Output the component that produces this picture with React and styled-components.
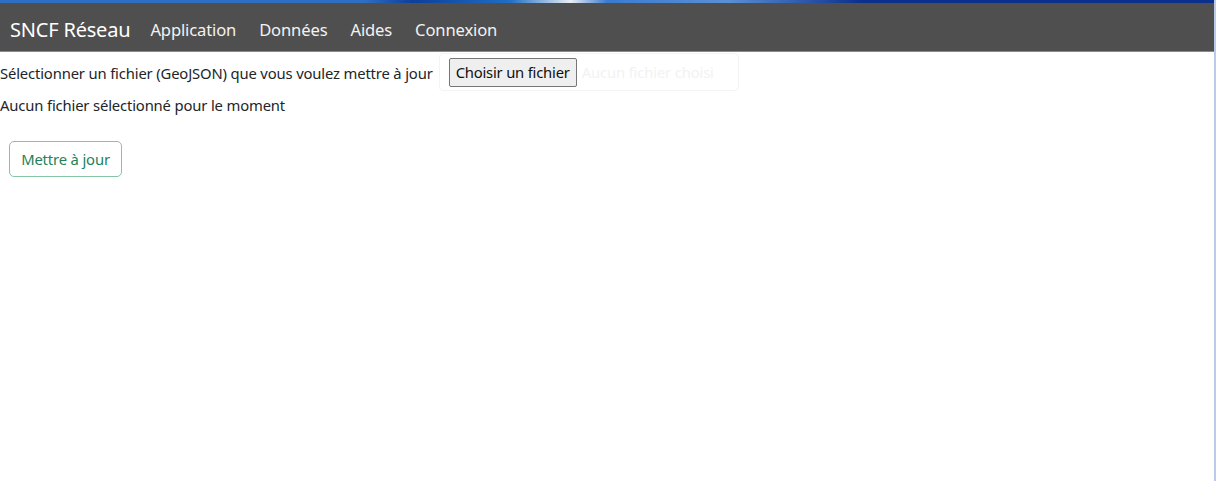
import React from 'react';
import styled, { createGlobalStyle } from 'styled-components';

const Global = createGlobalStyle`
  html, body {
    margin: 0;
    padding: 0;
    background: #fff;
  }
  body {
    font-family: "Noto Sans", "Open Sans", sans-serif;
    color: #212529;
  }
`;

const Frame = styled.div`
  width: 1216px;
  height: 481px;
  display: flex;
  flex-direction: column;
  overflow: hidden;
  border-right: 2px solid #b9cbe8;
  box-sizing: border-box;
`;

const TopStrip = styled.div`
  height: 3px;
  flex: none;
  background: linear-gradient(
    90deg,
    #2f6fc2 0%,
    #2f6fc2 30%,
    #0d3e9c 34%,
    #1f6fc4 42%,
    #e9eef5 47%,
    #3a7bd0 50%,
    #5a8fd4 60%,
    #0b2f8c 71%,
    #0b2f8c 100%
  );
`;

const Navbar = styled.nav`
  height: 49px;
  flex: none;
  box-sizing: border-box;
  background: #4f4f4f;
  display: flex;
  align-items: center;
  padding: 5px 10px 0;
  gap: 23px;
  border-bottom: 1px solid #8a8a8a;
`;

const Brand = styled.span`
  font-size: 20px;
  color: #fff;
  margin-right: -3px;
  letter-spacing: -0.2px;
`;

const NavLink = styled.a`
  font-size: 16.6px;
  color: #f2f2f2;
  text-decoration: none;
  letter-spacing: -0.15px;
`;

const Main = styled.main`
  display: flex;
  flex-direction: column;
  font-size: 14.8px;
  letter-spacing: -0.15px;
`;

const UploadRow = styled.div`
  display: flex;
  align-items: center;
  height: 41px;
`;

const Label = styled.span`
  margin-right: 6px;
`;

const FileBox = styled.div`
  width: 300px;
  height: 38px;
  box-sizing: border-box;
  border: 1px solid #f4f4f4;
  border-radius: 4px;
  display: flex;
  align-items: center;
  padding-left: 9px;
  gap: 5px;
  margin-top: -1px;
  white-space: nowrap;
  overflow: hidden;
`;

const ChooseButton = styled.button`
  font-family: inherit;
  font-size: 14.8px;
  letter-spacing: -0.2px;
  height: 29px;
  padding: 0 6px;
  background: #efefef;
  color: #111;
  border: 1px solid #767676;
  border-radius: 2px;
`;

const NoFile = styled.span`
  color: #f2f2f2;
`;

const Status = styled.p`
  margin: 0;
  line-height: 22px;
  margin-top: 1px;
`;

const UpdateButton = styled.button`
  font-family: inherit;
  font-size: 14.8px;
  letter-spacing: -0.15px;
  align-self: flex-start;
  margin: 25px 0 0 9px;
  width: 113px;
  height: 36px;
  background: #fff;
  color: #23815a;
  border: 1px solid #86c4a6;
  border-radius: 5px;
`;

export default function App() {
  return (
    <>
      <Global />
      <Frame>
        <TopStrip />
        <Navbar>
          <Brand>SNCF Réseau</Brand>
          <NavLink>Application</NavLink>
          <NavLink>Données</NavLink>
          <NavLink>Aides</NavLink>
          <NavLink>Connexion</NavLink>
        </Navbar>
        <Main>
          <UploadRow>
            <Label>Sélectionner un fichier (GeoJSON) que vous voulez mettre à jour</Label>
            <FileBox>
              <ChooseButton>Choisir un fichier</ChooseButton>
              <NoFile>Aucun fichier choisi</NoFile>
            </FileBox>
          </UploadRow>
          <Status>Aucun fichier sélectionné pour le moment</Status>
          <UpdateButton>Mettre à jour</UpdateButton>
        </Main>
      </Frame>
    </>
  );
}
